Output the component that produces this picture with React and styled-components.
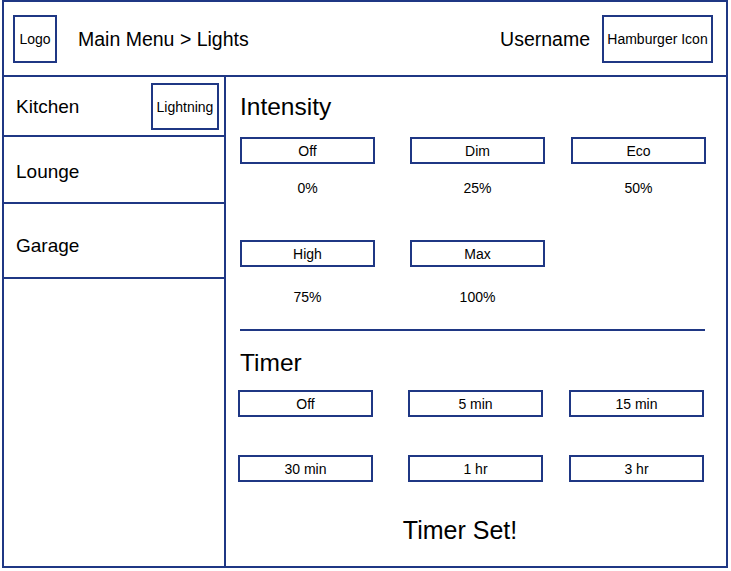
import React from "react";
import styled, { createGlobalStyle } from "styled-components";

const NAVY = "#1f3784";

const Global = createGlobalStyle`
  html, body { margin: 0; padding: 0; background: #fff; }
  body { font-family: "Liberation Sans", Arial, sans-serif; color: #000; }
  * { box-sizing: border-box; }
`;

const Frame = styled.div`
  margin-left: 2px;
  width: 726px;
  height: 568px;
  border: 2px solid ${NAVY};
  display: grid;
  grid-template-rows: 75px 1fr;
`;

const Header = styled.header`
  display: flex;
  align-items: center;
  padding: 1px 13px 0 9px;
  border-bottom: 2px solid ${NAVY};
`;

const Box = styled.div`
  width: ${(p) => p.$w}px;
  height: ${(p) => p.$h}px;
  border: 2px solid ${NAVY};
  display: flex;
  align-items: center;
  justify-content: center;
  font-size: 14px;
  white-space: nowrap;
  flex-shrink: 0;
`;

const Crumb = styled.div`
  margin-left: 21px;
  font-size: 19.5px;
  flex: 1;
`;

const User = styled.div`
  font-size: 19.5px;
  margin-right: 12px;
`;

const Body = styled.div`
  display: grid;
  grid-template-columns: 222px 1fr;
  min-height: 0;
`;

const Sidebar = styled.nav`
  border-right: 2px solid ${NAVY};
  display: flex;
  flex-direction: column;
`;

const NavRow = styled.div`
  height: ${(p) => p.$h}px;
  padding: ${(p) => p.$pad}px 5px 0 12px;
  border-bottom: 2px solid ${NAVY};
  display: flex;
  align-items: center;
  justify-content: space-between;
  font-size: 19px;
`;

const Content = styled.main`
  padding: 16px 0 0 14px;
  display: flex;
  flex-direction: column;
`;

const Heading = styled.h2`
  margin: ${(p) => p.$top || 0}px 0 0 0;
  font-size: 24.5px;
  font-weight: normal;
  line-height: 28px;
`;

const OptionRow = styled.div`
  display: grid;
  grid-template-columns: 170px 161px 135px;
  margin: ${(p) => p.$top}px 0 0 ${(p) => p.$indent || 0}px;
`;

const Option = styled.div`
  width: 135px;
  display: flex;
  flex-direction: column;
  align-items: center;
`;

const OptButton = styled.button`
  width: 135px;
  height: 27px;
  border: 2px solid ${NAVY};
  background: #fff;
  font-family: inherit;
  font-size: 14px;
  color: #000;
  padding: 0;
  display: flex;
  align-items: center;
  justify-content: center;
`;

const Value = styled.div`
  margin-top: ${(p) => p.$gap}px;
  font-size: 14px;
  line-height: 16px;
`;

const Divider = styled.hr`
  margin: 24px 0 0 0;
  width: 465px;
  border: none;
  border-top: 2px solid ${NAVY};
  height: 0;
`;

const Status = styled.div`
  margin-top: 34px;
  width: 440px;
  text-align: center;
  font-size: 25px;
  line-height: 28px;
`;

const intensityRows = [
  { top: 16, gap: 16, items: [["Off", "0%"], ["Dim", "25%"], ["Eco", "50%"]] },
  { top: 44, gap: 22, items: [["High", "75%"], ["Max", "100%"]] },
];

const timerRows = [
  { top: 13, items: ["Off", "5 min", "15 min"] },
  { top: 38, items: ["30 min", "1 hr", "3 hr"] },
];

export default function App() {
  return (
    <>
      <Global />
      <Frame>
        <Header>
          <Box $w={44} $h={48}>Logo</Box>
          <Crumb>Main Menu &gt; Lights</Crumb>
          <User>Username</User>
          <Box $w={111} $h={48}>Hamburger Icon</Box>
        </Header>
        <Body>
          <Sidebar>
            <NavRow $h={60} $pad={1}>
              <span>Kitchen</span>
              <Box $w={68} $h={47}>Lightning</Box>
            </NavRow>
            <NavRow $h={67} $pad={4}>
              <span>Lounge</span>
            </NavRow>
            <NavRow $h={75} $pad={10}>
              <span>Garage</span>
            </NavRow>
          </Sidebar>
          <Content>
            <Heading>Intensity</Heading>
            {intensityRows.map((row, i) => (
              <OptionRow key={i} $top={row.top}>
                {row.items.map(([label, value]) => (
                  <Option key={label}>
                    <OptButton>{label}</OptButton>
                    <Value $gap={row.gap}>{value}</Value>
                  </Option>
                ))}
              </OptionRow>
            ))}
            <Divider />
            <Heading $top={18}>Timer</Heading>
            {timerRows.map((row, i) => (
              <OptionRow key={i} $top={row.top} $indent={-2}>
                {row.items.map((label) => (
                  <Option key={label}>
                    <OptButton>{label}</OptButton>
                  </Option>
                ))}
              </OptionRow>
            ))}
            <Status>Timer Set!</Status>
          </Content>
        </Body>
      </Frame>
    </>
  );
}
